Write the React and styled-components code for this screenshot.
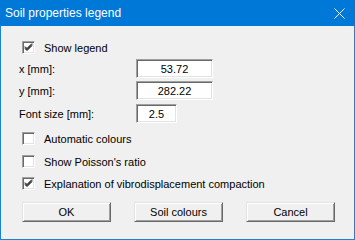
import styled, { createGlobalStyle } from "styled-components"

const Global = createGlobalStyle`
  html, body { margin: 0; padding: 0; background: #ffffff; }
  body { width: 355px; height: 240px; overflow: hidden; }
`

const Window = styled.div`
  box-sizing: border-box;
  width: 355px;
  height: 240px;
  border: 1px solid #1883d7;
  border-top: none;
  background: #f0f0f0;
  display: flex;
  flex-direction: column;
  font-family: "Liberation Sans", Arial, sans-serif;
  font-size: 11px;
  color: #000;
`

const TitleBar = styled.div`
  height: 26px;
  margin: 0 -1px;
  background: #0078d7;
  color: #fff;
  display: flex;
  align-items: center;
  justify-content: space-between;
  padding: 0 10px 0 5px;
  font-size: 12px;
`

const Body = styled.div`
  display: flex;
  flex-direction: column;
  padding: 15px 0 0 18px;
`

const CheckRow = styled.label`
  display: flex;
  align-items: center;
  gap: 9px;
  height: 13px;
  margin-left: 3px;
  margin-top: ${p => p.$top || 0}px;
`

const Box = styled.span`
  box-sizing: border-box;
  width: 13px;
  height: 13px;
  background: #fff;
  border-top: 1px solid #a0a0a0;
  border-left: 1px solid #a0a0a0;
  border-right: 1px solid #fff;
  border-bottom: 1px solid #fff;
  box-shadow: inset 1px 1px 0 #696969, inset -1px -1px 0 #e3e3e3;
  display: flex;
  align-items: center;
  justify-content: center;
`

const FieldRow = styled.div`
  display: flex;
  align-items: center;
  margin-top: ${p => p.$top || 0}px;
`

const Label = styled.span`
  width: 117px;
`

const Input = styled.div`
  box-sizing: border-box;
  width: ${p => p.$w}px;
  height: 19px;
  background: #fff;
  border-top: 1px solid #a0a0a0;
  border-left: 1px solid #a0a0a0;
  border-right: 1px solid #fff;
  border-bottom: 1px solid #fff;
  box-shadow: inset 1px 1px 0 #696969, inset -1px -1px 0 #e3e3e3;
  display: flex;
  align-items: center;
  justify-content: center;
  padding-top: 1px;
`

const Buttons = styled.div`
  display: flex;
  gap: 23px;
  margin: 12px 0 0 3px;
`

const Button = styled.div`
  box-sizing: border-box;
  width: 89px;
  height: 20px;
  background: #f0f0f0;
  border-top: 1px solid #e3e3e3;
  border-left: 1px solid #e3e3e3;
  border-right: 1px solid #696969;
  border-bottom: 1px solid #696969;
  box-shadow: inset 1px 1px 0 #fff, inset -1px -1px 0 #a0a0a0;
  display: flex;
  align-items: center;
  justify-content: center;
`

const Check = () => (
  <svg width="9" height="9" viewBox="0 0 9 9">
    <path d="M1 3.5 L3 5.5 L8 0.5 M1 4.5 L3 6.5 L8 1.5 M1 5.5 L3 7.5 L8 2.5" stroke="#000" strokeWidth="1" fill="none" />
  </svg>
)

const Close = () => (
  <svg width="11" height="11" viewBox="0 0 11 11">
    <path d="M0.5 0.5 L10.5 10.5 M10.5 0.5 L0.5 10.5" stroke="#fff" strokeWidth="1" />
  </svg>
)

function CheckItem({ checked, top, children }) {
  return (
    <CheckRow $top={top}>
      <Box>{checked && <Check />}</Box>
      {children}
    </CheckRow>
  )
}

export default function App() {
  return (
    <>
      <Global />
      <Window>
        <TitleBar>
          <span>Soil properties legend</span>
          <Close />
        </TitleBar>
        <Body>
          <CheckItem checked>Show legend</CheckItem>
          <FieldRow $top={5}>
            <Label>x [mm]:</Label>
            <Input $w={77}>53.72</Input>
          </FieldRow>
          <FieldRow $top={3}>
            <Label>y [mm]:</Label>
            <Input $w={77}>282.22</Input>
          </FieldRow>
          <FieldRow $top={4}>
            <Label>Font size [mm]:</Label>
            <Input $w={41}>2.5</Input>
          </FieldRow>
          <CheckItem top={9}>Automatic colours</CheckItem>
          <CheckItem top={10}>Show Poisson's ratio</CheckItem>
          <CheckItem checked top={9}>Explanation of vibrodisplacement compaction</CheckItem>
          <Buttons>
            <Button>OK</Button>
            <Button>Soil colours</Button>
            <Button>Cancel</Button>
          </Buttons>
        </Body>
      </Window>
    </>
  )
}
